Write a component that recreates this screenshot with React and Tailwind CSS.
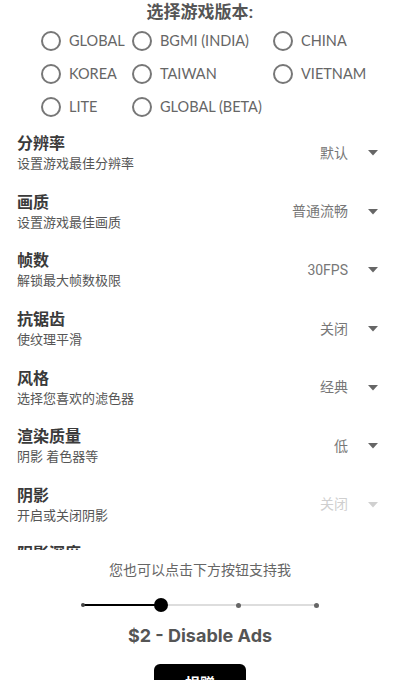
import React, { useState } from 'react';

const VERSIONS = [
  'GLOBAL', 'BGMI (INDIA)', 'CHINA',
  'KOREA', 'TAIWAN', 'VIETNAM',
  'LITE', 'GLOBAL (BETA)',
];

const SETTINGS = [
  { title: '分辨率', desc: '设置游戏最佳分辨率', value: '默认' },
  { title: '画质', desc: '设置游戏最佳画质', value: '普通流畅' },
  { title: '帧数', desc: '解锁最大帧数极限', value: '30FPS' },
  { title: '抗锯齿', desc: '使纹理平滑', value: '关闭' },
  { title: '风格', desc: '选择您喜欢的滤色器', value: '经典' },
  { title: '渲染质量', desc: '阴影 着色器等', value: '低' },
  { title: '阴影', desc: '开启或关闭阴影', value: '关闭', disabled: true },
  { title: '阴影深度', desc: '调整阴影深度', value: '关闭', disabled: true },
];

const cjk = "font-['Roboto','Noto_Sans_CJK_SC',sans-serif]";

function Caret({ disabled }) {
  return (
    <svg width="10" height="6" viewBox="0 0 10 6" className={disabled ? 'text-[#d0d0d0]' : 'text-[#666]'}>
      <path d="M0 0h10L5 5.5z" fill="currentColor" />
    </svg>
  );
}

export default function App() {
  const [version, setVersion] = useState(null);

  return (
    <div className={`w-[400px] h-[680px] bg-white flex flex-col overflow-hidden ${cjk}`}>
      {/* Scroll area */}
      <div className="flex-1 overflow-hidden">
        <h1 className="text-center text-[17px] leading-[24px] font-bold text-[#555]">选择游戏版本:</h1>

        <div className="grid grid-cols-[91px_141px_1fr] pl-[41px]">
          {VERSIONS.map((v) => (
            <button
              key={v}
              onClick={() => setVersion(v)}
              className="flex items-center gap-[8px] h-[33px] text-left"
            >
              <span className="w-[20px] h-[20px] rounded-full border-2 border-[#777] shrink-0 flex items-center justify-center">
                {version === v && <span className="w-[10px] h-[10px] rounded-full bg-[#555]" />}
              </span>
              <span className="font-['Lato',sans-serif] text-[14.5px] text-[#666] whitespace-nowrap">{v}</span>
            </button>
          ))}
        </div>

        <div className="mt-[10px] pl-[17px] pr-[22px]">
          {SETTINGS.map((s) => (
            <div key={s.title} className="flex items-center h-[58.6px] pb-[18px]">
              <div className="flex-1">
                <div className="text-[16px] leading-[22px] font-bold text-[#3a3a3a]">{s.title}</div>
                <div className="text-[13px] leading-[18px] text-[#555]">{s.desc}</div>
              </div>
              <span className={`text-[14px] ${s.disabled ? 'text-[#cfcfcf]' : 'text-[#777]'}`}>{s.value}</span>
              <span className="ml-[20px]"><Caret disabled={s.disabled} /></span>
            </div>
          ))}
        </div>
      </div>

      {/* Support panel */}
      <div className="h-[130px] shrink-0 bg-white flex flex-col items-center pt-[10px]">
        <p className="text-[14px] leading-[20px] text-[#666]">您也可以点击下方按钮支持我</p>

        <div className="relative w-[234px] h-[14px] mt-[18px] shrink-0 flex items-center">
          <div className="absolute left-0 w-[78px] h-[2px] bg-black" />
          <div className="absolute left-[78px] right-0 h-[2px] bg-[#ddd]" />
          <span className="absolute left-[-2px] w-[4px] h-[4px] rounded-full bg-[#444]" />
          <span className="absolute left-[153px] w-[5px] h-[5px] rounded-full bg-[#666]" />
          <span className="absolute right-[-2px] w-[5px] h-[5px] rounded-full bg-[#666]" />
          <span className="absolute left-[71px] w-[14px] h-[14px] rounded-full bg-black" />
        </div>

        <p className="mt-[12px] text-[18px] leading-[24px] font-bold text-[#555] font-['Inter',sans-serif]">$2 - Disable Ads</p>

        <button className="mt-[16px] shrink-0 w-[92px] h-[40px] rounded-md bg-black text-white text-[15px] font-bold">捐赠</button>
      </div>
    </div>
  );
}
